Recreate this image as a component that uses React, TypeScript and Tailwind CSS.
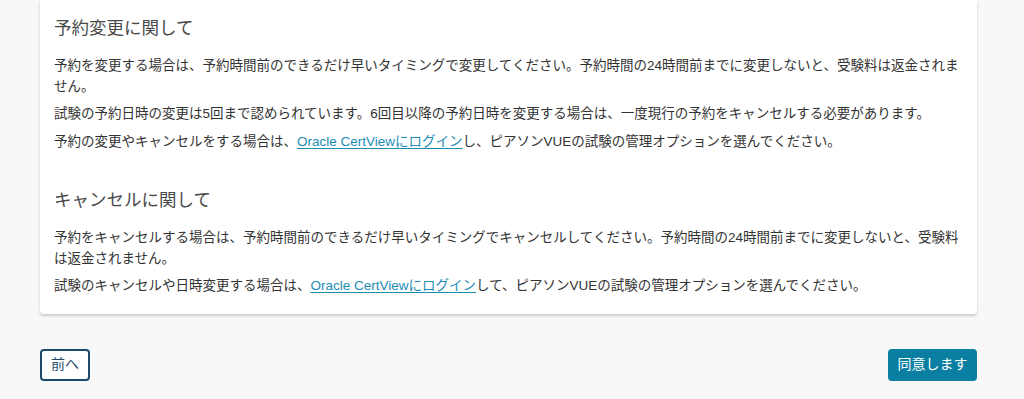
const font = "font-['Liberation_Sans','Noto_Sans_CJK_JP',sans-serif]";

const TextLink = ({ children }: { children: React.ReactNode }) => (
	<a href="#" className="text-[#1a8db5] underline underline-offset-2">
		{children}
	</a>
);

const Section = ({ title, children }: { title: string; children: React.ReactNode }) => (
	<section>
		<h2 className="text-[17.5px] leading-[26px] text-[#4a4a4a]">{title}</h2>
		<div className="mt-[15px] flex flex-col gap-[7px] text-[13.5px] leading-[20.5px] text-[#333]">{children}</div>
	</section>
);

export default function App() {
	return (
		<div className={`${font} min-h-[399px] bg-[#f8f8f8] px-[40px] pt-0`} style={{ width: 1024 }}>
			<div className="w-[937px] rounded-b-[4px] bg-white px-[14px] pt-[15px] pb-[17px] shadow-[0_2px_3px_rgba(0,0,0,0.18)]">
				<Section title="予約変更に関して">
					<p>
						予約を変更する場合は、予約時間前のできるだけ早いタイミングで変更してください。予約時間の24時間前までに変更しないと、受験料は返金されません。
					</p>
					<p>試験の予約日時の変更は5回まで認められています。6回目以降の予約日時を変更する場合は、一度現行の予約をキャンセルする必要があります。</p>
					<p>
						予約の変更やキャンセルをする場合は、<TextLink>Oracle CertViewにログイン</TextLink>
						し、ピアソンVUEの試験の管理オプションを選んでください。
					</p>
				</Section>
				<div className="h-[35px]" />
				<Section title="キャンセルに関して">
					<p>
						予約をキャンセルする場合は、予約時間前のできるだけ早いタイミングでキャンセルしてください。予約時間の24時間前までに変更しないと、受験料は返金されません。
					</p>
					<p>
						試験のキャンセルや日時変更する場合は、<TextLink>Oracle CertViewにログイン</TextLink>
						して、ピアソンVUEの試験の管理オプションを選んでください。
					</p>
				</Section>
			</div>
			<div className="mt-[35px] flex w-[937px] items-center justify-between">
				<button className="h-[32px] w-[50px] rounded-[4px] border-2 border-[#1d4a6b] bg-white text-[14px] text-[#1d4a6b]">
					前へ
				</button>
				<button className="h-[32px] w-[89px] rounded-[4px] bg-[#0b7fa1] text-[14px] text-white">同意します</button>
			</div>
		</div>
	);
}
